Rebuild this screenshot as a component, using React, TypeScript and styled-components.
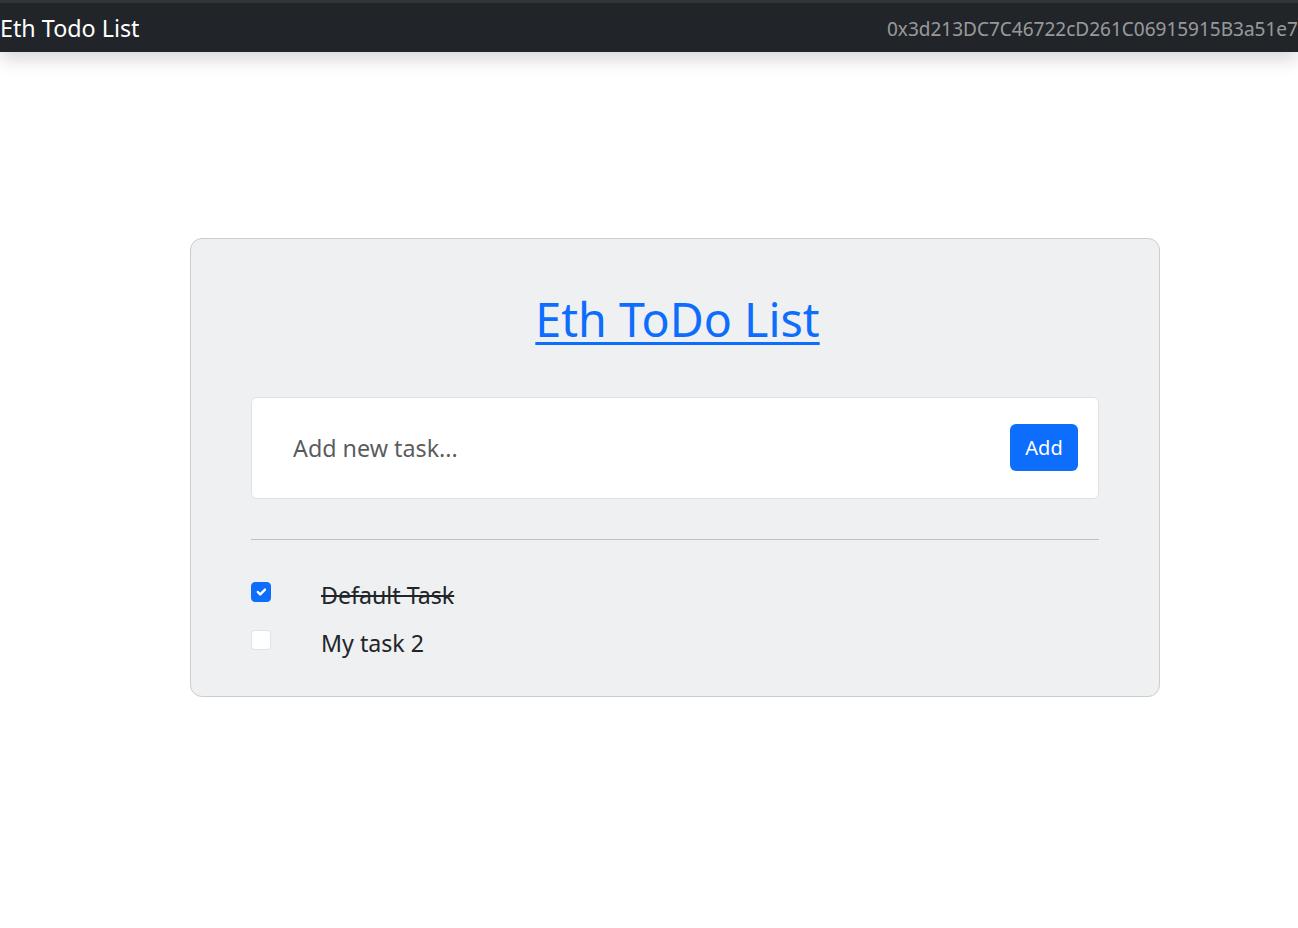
import React from "react";
import styled, { createGlobalStyle } from "styled-components";

const GlobalStyle = createGlobalStyle`
  html, body { margin: 0; padding: 0; background: #ffffff; }
  body {
    font-family: "Noto Sans", "Open Sans", sans-serif;
    color: #212529;
    overflow: hidden;
  }
  * { box-sizing: border-box; }
`;

const Page = styled.div`
  width: 1298px;
  min-height: 928px;
  display: flex;
  flex-direction: column;
`;

const Navbar = styled.nav`
  display: flex;
  align-items: center;
  height: 52px;
  padding-top: 2px;
  border-top: 3px solid #333436;
  background: #212529;
  box-shadow: 0 0.5rem 1rem rgba(0, 0, 0, 0.15);
  overflow: hidden;
  white-space: nowrap;
  position: relative;
  z-index: 1;
`;

const Brand = styled.span`
  flex: 0 0 887px;
  font-size: 23.3px;
  color: #ffffff;
  line-height: 1;
`;

const Address = styled.span`
  flex: 0 0 auto;
  font-size: 19px;
  color: rgba(255, 255, 255, 0.55);
  line-height: 1;
  padding-top: 2px;
`;

const Main = styled.main`
  padding: 186px 0 0 190px;
`;

const Card = styled.section`
  width: 970px;
  background: #eff0f2;
  border: 1px solid #cbcccd;
  border-radius: 12px;
  padding: 51px 60px 29px 60px;
`;

const Title = styled.h1`
  margin: 0;
  padding-left: 5px;
  text-align: center;
  font-size: 46.6px;
  font-weight: 400;
  line-height: 58px;
  a {
    color: #0d6efd;
    text-decoration: underline;
    text-decoration-thickness: 3px;
    text-underline-offset: 5px;
  }
`;

const InputBox = styled.form`
  margin-top: 49px;
  display: flex;
  align-items: center;
  height: 102px;
  padding: 0 20px 0 41px;
  background: #ffffff;
  border: 1px solid #dee2e6;
  border-radius: 6px;
`;

const TaskInput = styled.input`
  flex: 1;
  border: none;
  outline: none;
  background: transparent;
  font-family: inherit;
  font-size: 23.3px;
  color: #212529;
  padding: 0;
  &::placeholder {
    color: rgba(33, 37, 41, 0.75);
  }
`;

const AddButton = styled.button`
  width: 68px;
  height: 47px;
  border: none;
  border-radius: 6px;
  background: #0d6efd;
  color: #ffffff;
  font-family: inherit;
  font-size: 20px;
  cursor: pointer;
  padding: 0;
  margin-top: -1px;
`;

const Divider = styled.hr`
  margin: 40px 0 0 0;
  border: none;
  border-top: 1px solid #bfc0c2;
`;

const TaskList = styled.ul`
  list-style: none;
  margin: 0;
  padding: 31px 0 0 0;
  display: flex;
  flex-direction: column;
`;

const TaskRow = styled.li`
  display: flex;
  align-items: center;
  height: 48px;
`;

const Check = styled.span<{ $checked: boolean }>`
  flex: 0 0 20px;
  width: 20px;
  height: 20px;
  border-radius: 4px;
  display: flex;
  align-items: center;
  justify-content: center;
  background: ${(p) => (p.$checked ? "#0d6efd" : "#ffffff")};
  border: 1px solid ${(p) => (p.$checked ? "#0d6efd" : "#dee2e6")};
  margin-top: -6px;
`;

const TaskText = styled.span<{ $done: boolean }>`
  margin-left: 50px;
  font-size: 23.2px;
  color: #212529;
  text-decoration: ${(p) => (p.$done ? "line-through" : "none")};
  text-decoration-thickness: 2px;
`;

const tasks = [
  { id: 1, content: "Default Task", completed: true },
  { id: 2, content: "My task 2", completed: false },
];

export default function App() {
  return (
    <>
      <GlobalStyle />
      <Page>
        <Navbar>
          <Brand>Eth Todo List</Brand>
          <Address>0x3d213DC7C46722cD261C06915915B3a51e7B4f2A</Address>
        </Navbar>
        <Main>
          <Card>
            <Title>
              <a href="#">Eth ToDo List</a>
            </Title>
            <InputBox onSubmit={(e) => e.preventDefault()}>
              <TaskInput placeholder="Add new task..." />
              <AddButton type="submit">Add</AddButton>
            </InputBox>
            <Divider />
            <TaskList>
              {tasks.map((t) => (
                <TaskRow key={t.id}>
                  <Check $checked={t.completed}>
                    {t.completed && (
                      <svg width="16" height="16" viewBox="0 0 20 20">
                        <path
                          fill="none"
                          stroke="#fff"
                          strokeLinecap="round"
                          strokeLinejoin="round"
                          strokeWidth="3"
                          d="M6 10l3 3 6-6"
                        />
                      </svg>
                    )}
                  </Check>
                  <TaskText $done={t.completed}>{t.content}</TaskText>
                </TaskRow>
              ))}
            </TaskList>
          </Card>
        </Main>
      </Page>
    </>
  );
}
